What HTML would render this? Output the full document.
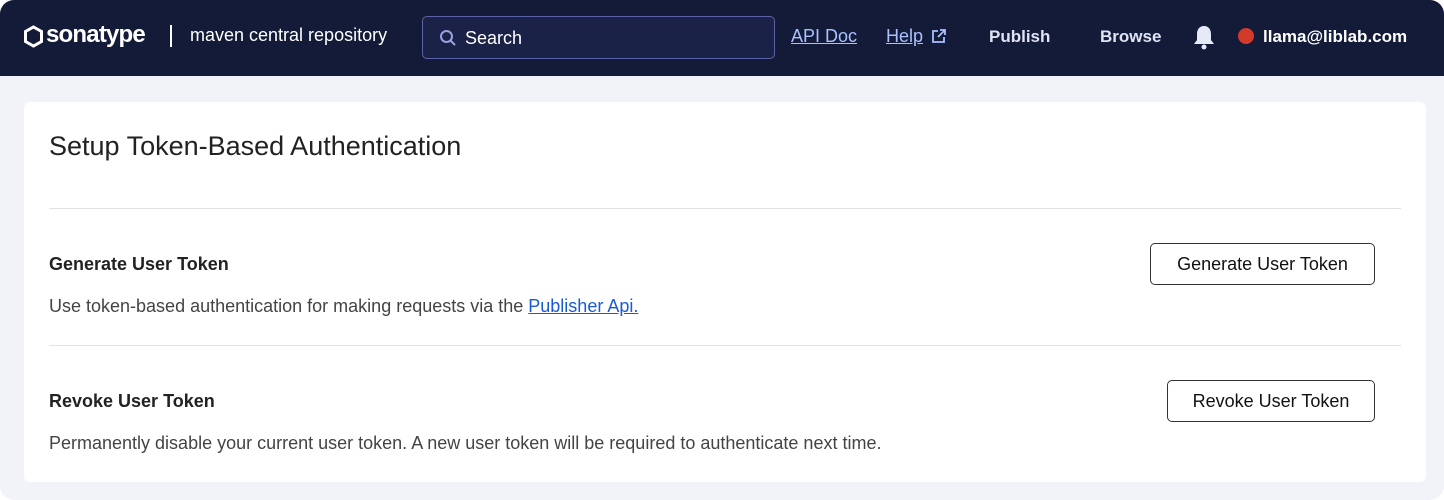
<!DOCTYPE html>
<html><head><style>
*{box-sizing:border-box;margin:0;padding:0}
body{width:1444px;height:500px;background:#fff;font-family:"Liberation Sans",sans-serif;overflow:hidden}
.wrap{position:absolute;left:0;top:0;width:1444px;height:500px;background:#f1f3f9;border-radius:14px;overflow:hidden}
.hdr{position:absolute;left:0;top:0;width:1444px;height:76px;background:#131b38;color:#fff}
.hdr span{position:absolute;top:26px;font-size:18px}
.search{position:absolute;left:422px;top:16px;width:353px;height:43px;border:1px solid #5b63a6;border-radius:5px;background:#1a2247}
.card{position:absolute;left:24px;top:102px;width:1402px;height:380px;background:#fff;border-radius:6px}
.t{position:absolute;color:#222}
.btn{position:absolute;border:1px solid #333;border-radius:5px;background:#fff;font-size:18px;color:#111;text-align:center;line-height:40px;height:42px}
hr{position:absolute;border:0;border-top:1px solid #e2e2e6;left:25px;width:1352px}
</style></head><body><div class="wrap">
<div class="hdr">
<svg style="position:absolute;left:23px;top:25px" width="21" height="23" viewBox="0 0 21 23"><path d="M10.5 2L18.5 6.5V16.5L10.5 21L2.5 16.5V6.5Z" fill="none" stroke="#fff" stroke-width="3"/></svg>
<span style="left:46px;top:21px;font-size:24px;font-weight:bold;letter-spacing:-0.8px">sonatype</span>
<div style="position:absolute;left:170px;top:25px;width:2px;height:22px;background:#fff"></div>
<span style="left:190px;top:25px;font-size:18px">maven central repository</span>
<div class="search"><svg style="position:absolute;left:16px;top:12px" width="18" height="18" viewBox="0 0 18 18"><circle cx="7.5" cy="7.5" r="5.5" fill="none" stroke="#9aa0e0" stroke-width="2"/><path d="M11.5 11.5L16 16" stroke="#9aa0e0" stroke-width="2"/></svg><span style="left:42px;top:11px;font-size:18px;color:#fff">Search</span></div>
<span style="left:791px;color:#a9c1ff;text-decoration:underline">API Doc</span>
<span style="left:886px;color:#a9c1ff;text-decoration:underline">Help</span>
<svg style="position:absolute;left:931px;top:28px" width="16" height="16" viewBox="0 0 16 16"><path d="M13 9v5H2V3h5M9 2h5v5M14 2L7 9" fill="none" stroke="#a9c1ff" stroke-width="1.8"/></svg>
<span style="left:989px;font-weight:bold;color:#dfe3f3;font-size:17px;top:27px">Publish</span>
<span style="left:1100px;font-weight:bold;color:#dfe3f3;font-size:17px;top:27px">Browse</span>
<svg style="position:absolute;left:1192px;top:24px" width="24" height="26" viewBox="0 0 24 26"><path d="M12 2c-5 0-7 4-7 8v6l-3 4h20l-3-4v-6c0-4-2-8-7-8z" fill="#e6e9f7"/><circle cx="12" cy="23" r="2.5" fill="#e6e9f7"/></svg>
<div style="position:absolute;left:1238px;top:28px;width:16px;height:16px;border-radius:50%;background:#d23a2a"></div>
<span style="left:1263px;font-weight:bold;font-size:17px;top:27px">llama@liblab.com</span>
</div>
<div class="card">
<div class="t" style="left:25px;top:29px;font-size:27px">Setup Token-Based Authentication</div>
<hr style="top:106px">
<div class="t" style="left:25px;top:152px;font-size:18px;font-weight:bold">Generate User Token</div>
<div class="t" style="left:25px;top:194px;font-size:18px;color:#444">Use token-based authentication for making requests via the <span style="color:#1a5ad6;text-decoration:underline">Publisher Api.</span></div>
<div class="btn" style="left:1126px;top:141px;width:225px">Generate User Token</div>
<hr style="top:243px">
<div class="t" style="left:25px;top:289px;font-size:18px;font-weight:bold">Revoke User Token</div>
<div class="t" style="left:25px;top:331px;font-size:18px;color:#444">Permanently disable your current user token. A new user token will be required to authenticate next time.</div>
<div class="btn" style="left:1143px;top:278px;width:208px">Revoke User Token</div>
</div>
</div></body></html>
